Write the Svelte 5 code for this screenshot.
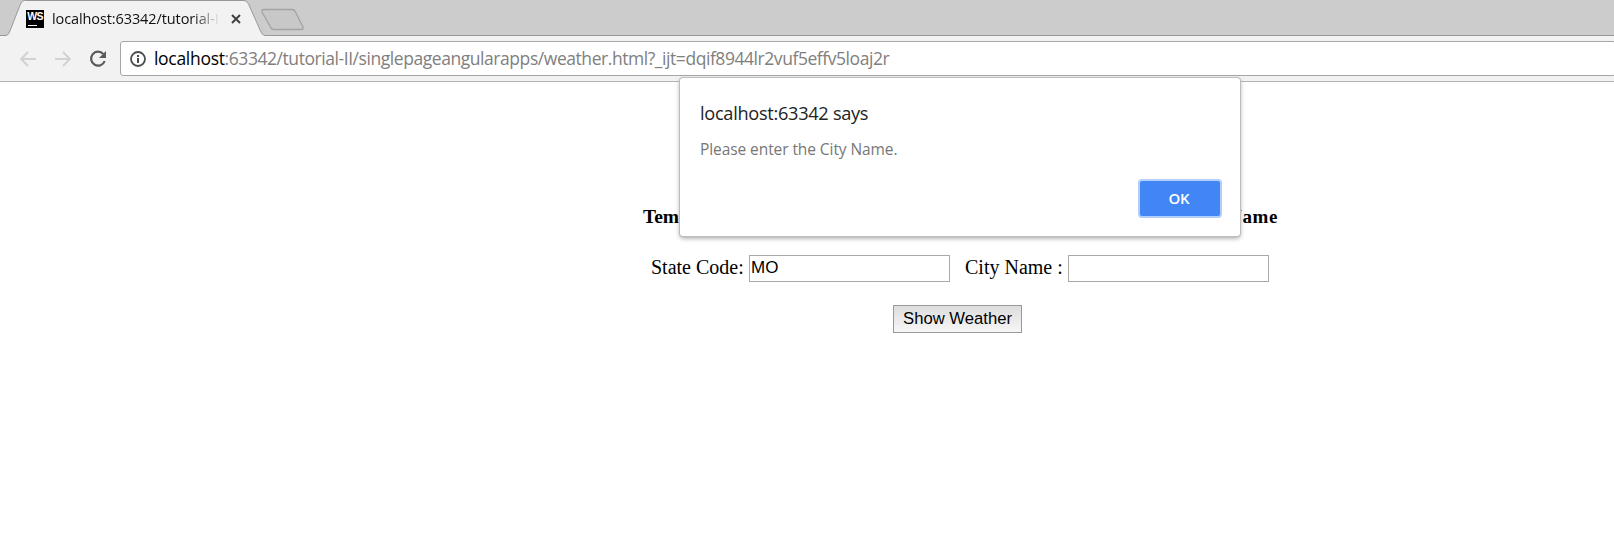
<script>
  let stateCode = $state('MO');
  let cityName = $state('');
</script>

<div class="browser">
  <header class="tabs">
    <svg class="strip" width="320" height="36" viewBox="0 0 320 36">
      <path class="tab-fill" d="M0 36V35.5H6Q8.500 35 9.500 32L20.500 4Q22 .5 24.500 .5H244Q247 .5 248.500 4L261 32Q262 35 265 35.500H320V36Z" />
      <path class="tab-line" d="M0 35.500H6Q8.500 35 9.500 32L20.500 4Q22 .5 24.500 .5H244Q247 .5 248.500 4L261 32Q262 35 265 35.500H320" />
      <path class="new-tab" d="M264 9.500H292Q294.500 9.500 295.500 12L303 27Q304 29.500 301 29.500H274Q271.500 29.500 270.500 27L262 12Q261 9.500 264 9.500Z" />
    </svg>
    <div class="tab">
      <div class="favicon"><span>WS</span></div>
      <div class="title">localhost:63342/tutorial-I</div>
      <svg class="close" width="10" height="10" viewBox="0 0 10 10"><path d="M1 1L9 9M9 1L1 9" /></svg>
    </div>
  </header>

  <nav class="toolbar">
    <svg class="arrow" width="16" height="16" viewBox="0 0 16 16"><path d="M16 8H1.500M8 1L1.200 8L8 15" /></svg>
    <svg class="arrow forward" width="16" height="16" viewBox="0 0 16 16"><path d="M0 8H14.500M8 1L14.800 8L8 15" /></svg>
    <svg class="reload" width="18" height="18" viewBox="0 0 18 18">
      <path class="ring" d="M14.300 4A7 7 0 1 0 15.700 11" />
      <path class="head" d="M17 1V8H10Z" />
    </svg>
    <div class="address">
      <svg class="info" width="16" height="16" viewBox="0 0 16 16">
        <circle cx="8" cy="8" r="7" />
        <path d="M7 7H9V12H7ZM7 4H9V6H7Z" />
      </svg>
      <div class="url"><b>localhost</b>:63342/tutorial-II/singlepageangularapps/weather.html?_ijt=dqif8944lr2vuf5effv5loaj2r</div>
    </div>
  </nav>

  <main>
    <h3><span>Tem</span><span class="end">Name</span></h3>
    <div class="fields">
      <label><span class="state">State Code:</span><input bind:value={stateCode} /></label>
      <label><span class="city">City Name :</span><input bind:value={cityName} /></label>
    </div>
    <button class="show">Show Weather</button>
  </main>

  <div class="dialog" role="alertdialog" aria-labelledby="origin">
    <div id="origin" class="origin">localhost:63342 says</div>
    <div class="message">Please enter the City Name.</div>
    <button class="ok">OK</button>
  </div>
</div>

<style>
  :global(body) { margin: 0; background: #fff; }
  .browser {
    position: relative;
    width: 1614px;
    height: 552px;
    overflow: hidden;
    background: #fff;
    font-family: "Open Sans", sans-serif;
  }
  .tabs { display: grid; height: 36px; background: linear-gradient(#ccc 35px, #999 35px); }
  .strip { grid-area: 1 / 1; }
  .tab-fill { fill: #f2f2f2; }
  .tab-line { fill: none; stroke: #999; }
  .new-tab { fill: #c8c8c8; stroke: #a3a3a3; stroke-width: 1.3; }
  .tab {
    grid-area: 1 / 1;
    position: relative;
    display: flex;
    align-items: center;
    box-sizing: border-box;
    width: 250px;
    height: 37px;
    padding-left: 26px;
  }
  .favicon {
    display: flex;
    flex-direction: column;
    align-items: center;
    box-sizing: border-box;
    width: 18px;
    height: 18px;
    background: linear-gradient(#fff, #fff) 2px 15px / 9px 1px no-repeat #000;
    color: #fff;
    font: 700 10.500px/13px "Liberation Sans", sans-serif;
    letter-spacing: -.6px;
  }
  .title {
    width: 168px;
    margin-left: 8px;
    white-space: nowrap;
    font-size: 14.500px;
    letter-spacing: -.1px;
    line-height: 24px;
    color: #111;
    -webkit-mask-image: linear-gradient(90deg, #000 84%, transparent);
    mask-image: linear-gradient(90deg, #000 84%, transparent);
  }
  .close { margin-left: 11px; fill: none; stroke: #404040; stroke-width: 2; }
  .toolbar {
    display: flex;
    align-items: center;
    box-sizing: border-box;
    height: 46px;
    padding-left: 20px;
    background: #f2f2f2;
    border-bottom: 1px solid #b5b5b5;
  }
  .arrow { flex: none; fill: none; stroke: #d2d2d2; stroke-width: 2; }
  .forward { margin-left: 19px; }
  .reload { flex: none; margin-left: 18px; }
  .ring { fill: none; stroke: #5a5a5a; stroke-width: 2.200; }
  .head { fill: #5a5a5a; }
  .address {
    flex: 1;
    display: flex;
    align-items: center;
    box-sizing: border-box;
    height: 35px;
    margin: 0 -2px 0 13px;
    padding-left: 9px;
    background: #fff;
    border: 1px solid #a6a6a6;
    border-radius: 3px;
  }
  .info { flex: none; fill: #4d4d4d; }
  .info circle { fill: none; stroke: #4d4d4d; stroke-width: 1.800; }
  .url {
    margin-left: 8px;
    padding-bottom: 2px;
    white-space: nowrap;
    font-size: 17.500px;
    letter-spacing: -.44px;
    line-height: 30px;
    color: #808080;
  }
  .url b { font-weight: 400; letter-spacing: -.3px; color: #000; }
  main {
    display: flex;
    flex-direction: column;
    align-items: center;
    padding-top: 124px;
    font-family: "Liberation Serif", serif;
    font-size: 20px;
    color: #000;
  }
  h3 {
    display: flex;
    justify-content: space-between;
    width: 635px;
    margin: 0;
    padding-left: 307px;
    font-size: 19.500px;
    line-height: 22px;
  }
  .end { font-size: 19px; letter-spacing: .6px; }
  .fields { display: flex; gap: 15px; margin: 27px 0 23px 306px; }
  label { display: flex; line-height: 24px; white-space: nowrap; }
  .state { width: 98px; }
  .city { width: 103px; }
  input {
    box-sizing: border-box;
    width: 201px;
    height: 27px;
    margin: 0;
    padding: 0 1px 1px;
    border: 1px solid #a9a9a9;
    border-radius: 0;
    outline: 0;
    background: #fff;
    font: 17px "Liberation Sans", sans-serif;
    color: #000;
  }
  .show {
    width: 129px;
    height: 28px;
    margin: 0 0 0 301px;
    padding: 0 0 1px;
    border: 1px solid #999;
    border-radius: 0;
    background: linear-gradient(#ddd, #f6f6f6);
    font: 16.670px "Liberation Sans", sans-serif;
    white-space: nowrap;
    color: #000;
  }
  .dialog {
    position: absolute;
    left: 680px;
    top: 78px;
    display: flex;
    flex-direction: column;
    box-sizing: border-box;
    width: 560px;
    height: 158px;
    padding: 21px 20px 20px;
    border-radius: 3px;
    background: #fff;
    box-shadow: 0 0 0 1px #bdbdbd, 0 2px 5px 0 rgba(0, 0, 0, .4);
  }
  .origin { font-size: 18.200px; letter-spacing: -.3px; line-height: 28px; color: #222; }
  .message { margin-top: 10px; font-size: 15.500px; letter-spacing: -.08px; line-height: 24px; color: #777; }
  .ok {
    align-self: flex-end;
    width: 80px;
    height: 35px;
    margin-top: auto;
    padding: 0 2px 2px 0;
    border: 0;
    border-radius: 2px;
    background: #4285f4;
    box-shadow: 0 0 0 2px #b3cefb;
    font: 600 15px "Open Sans", sans-serif;
    letter-spacing: -.2px;
    color: #fff;
  }
</style>
